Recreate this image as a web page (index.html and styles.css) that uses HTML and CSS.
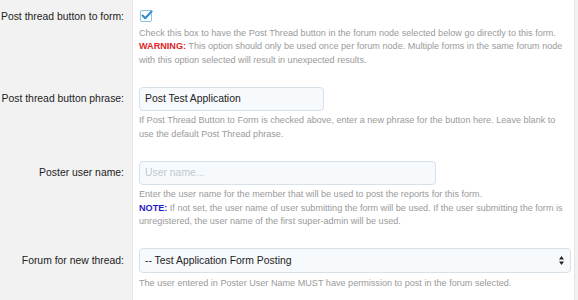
FILE: index.html
```html
<!DOCTYPE html>
<html>
<head>
<meta charset="utf-8">
<link rel="stylesheet" href="styles.css">
</head>
<body>
<div class="form">
  <div class="row row-check">
    <div class="label">Post thread button to form:</div>
    <div class="value">
      <span class="checkbox">
        <svg width="13" height="12" viewBox="0 0 13 12">
          <rect x="0.5" y="0.5" width="11" height="11" rx="1.5" fill="#fff" stroke="#8fc0e6"/>
          <path d="M2.6 5.6 L5.2 8.2 L11.6 1.4" fill="none" stroke="#2f8ad0" stroke-width="2.1" stroke-linecap="round" stroke-linejoin="round"/>
        </svg>
      </span>
      <p class="help help-first">Check this box to have the Post Thread button in the forum node selected below go directly to this form. <b class="warn">WARNING:</b> This option should only be used once per forum node. Multiple forms in the same forum node with this option selected will result in unexpected results.</p>
    </div>
  </div>
  <div class="row">
    <div class="label">Post thread button phrase:</div>
    <div class="value">
      <div class="input w-short">Post Test Application</div>
      <p class="help">If Post Thread Button to Form is checked above, enter a new phrase for the button here. Leave blank to use the default Post Thread phrase.</p>
    </div>
  </div>
  <div class="row">
    <div class="label">Poster user name:</div>
    <div class="value">
      <div class="input w-mid placeholder">User name...</div>
      <p class="help">Enter the user name for the member that will be used to post the reports for this form.<br><b class="note">NOTE:</b> If not set, the user name of user submitting the form will be used. If the user submitting the form is unregistered, the user name of the first super-admin will be used.</p>
    </div>
  </div>
  <div class="row">
    <div class="label">Forum for new thread:</div>
    <div class="value">
      <div class="input select">
        <span>-- Test Application Form Posting</span>
        <svg class="arrows" width="5" height="9" viewBox="0 0 5 9">
          <path d="M2.5 0 L5 3.6 L0 3.6 Z" fill="#222"/>
          <path d="M2.5 9 L5 5.4 L0 5.4 Z" fill="#222"/>
        </svg>
      </div>
      <p class="help">The user entered in Poster User Name MUST have permission to post in the forum selected.</p>
    </div>
  </div>
</div>
</body>
</html>
```
FILE: styles.css
```css
html, body {
  margin: 0;
  padding: 0;
  background: #f2f2f2;
  font-family: "Liberation Sans", Arial, sans-serif;
}
.form {
  width: 575px;
}
.row {
  display: flex;
}
.label {
  width: 132px;
  box-sizing: border-box;
  padding: 15.5px 8px 0 0;
  text-align: right;
  font-size: 10.4px;
  line-height: 13px;
  color: #222;
}
.row-check .label {
  padding-top: 9.5px;
}
.value {
  flex: 1;
  background: #fff;
  border-left: 1px solid #e8e8e8;
  border-right: 1px solid #e4e4e4;
  padding: 10px 3px 10px 6px;
}
.checkbox {
  display: block;
  height: 12px;
  margin-left: 1px;
}
.checkbox svg {
  display: block;
}
.help {
  margin: 3.5px 0 0;
  font-size: 9.1px;
  line-height: 13.3px;
  color: #9a9a9a;
}
.help-first {
  margin-top: 5px;
}
.warn {
  color: #e0242a;
}
.note {
  color: #1e1ec8;
}
.input {
  box-sizing: border-box;
  height: 24px;
  border: 1px solid #d8e0e8;
  border-radius: 4px;
  background: #f7fafd;
  padding: 0 5px;
  font-size: 10.4px;
  line-height: 22px;
  color: #222;
}
.w-short {
  width: 185px;
}
.w-mid {
  width: 297px;
}
.placeholder {
  color: #c2c8ce;
}
.select {
  display: flex;
  justify-content: space-between;
  align-items: center;
  height: 25px;
  padding: 0 6px 0 5px;
}
.arrows {
  display: block;
}
```
